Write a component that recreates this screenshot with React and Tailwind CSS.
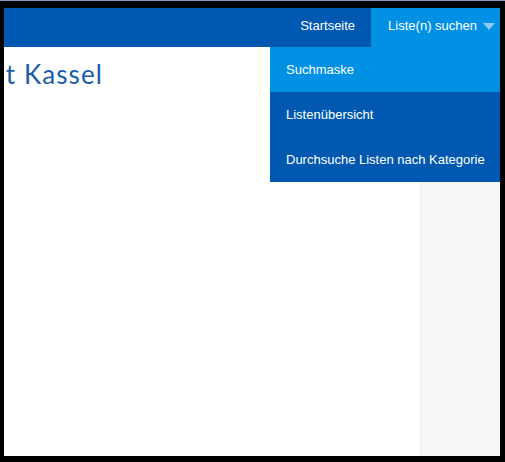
const NavItem = ({ label, active, caret }) => (
  <div
    className={`flex h-full items-center pb-1 text-[13px] text-white ${
      active ? 'bg-[#0090e4] pl-[17px] pr-[5px]' : 'pl-[15px] pr-[16px]'
    }`}
  >
    <span>{label}</span>
    {caret && (
      <svg width="12" height="7" viewBox="0 0 12 7" className="ml-[6px] mt-[2px]">
        <polygon points="0,0 12,0 6,7" fill="#8ec9f1" />
      </svg>
    )}
  </div>
);

const DropdownItem = ({ label, active }) => (
  <div
    className={`flex h-[45px] items-center pl-[16px] text-[13px] text-white ${
      active ? 'bg-[#0090e4]' : 'bg-[#0058b0]'
    }`}
  >
    {label}
  </div>
);

export default function App() {
  return (
    <div
      className="flex h-[462px] w-[505px] flex-col overflow-hidden bg-black"
      style={{ fontFamily: '"Liberation Sans", Arial, sans-serif' }}
    >
      <div className="h-px w-full bg-[#7a9cc8]" />
      <div className="flex flex-1 flex-col pt-[7px] pl-[4px] pr-[5px] pb-[6px]">
        <div className="relative flex h-[39px] justify-end bg-[#0158b1]">
          <NavItem label="Startseite" />
          <NavItem label="Liste(n) suchen" active caret />
          <div className="absolute right-0 top-[39px] z-10 flex w-[230px] flex-col">
            <DropdownItem label="Suchmaske" active />
            <DropdownItem label="Listenübersicht" />
            <DropdownItem label="Durchsuche Listen nach Kategorie" />
          </div>
        </div>
        <div className="flex flex-1">
          <div className="flex-1 bg-white">
            <div className="mt-[10px] flex w-[99px] justify-end overflow-hidden">
              <h1
                className="whitespace-nowrap text-[26px] font-normal leading-[34px] tracking-[1.1px] text-[#1a5ea8]"
                style={{ fontFamily: 'Lato, "Open Sans", sans-serif' }}
              >
                Universität Kassel
              </h1>
            </div>
          </div>
          <div className="w-[80px] border-l border-[#f0f0f0] bg-[#f6f6f6]" />
        </div>
      </div>
    </div>
  );
}
